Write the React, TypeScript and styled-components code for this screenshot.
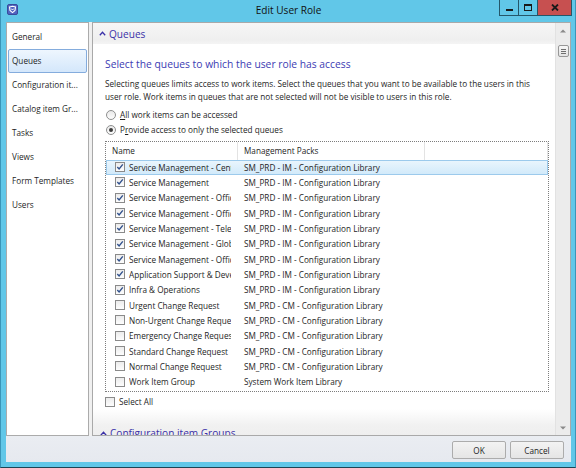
import React from 'react';
import styled, { createGlobalStyle } from 'styled-components';

const FONT = `"Open Sans", "Noto Sans", sans-serif`;

const GlobalStyle = createGlobalStyle`
  html, body {
    margin: 0;
    padding: 0;
    background: #61c7e8;
  }
  body {
    width: 576px;
    height: 468px;
    overflow: hidden;
  }
  * {
    box-sizing: border-box;
  }
`;

// Рамка вікна
const Window = styled.div`
  width: 576px;
  height: 468px;
  display: flex;
  flex-direction: column;
  background: #61c7e8;
  border: 1px solid #3a95b8;
  border-top: none;
  border-bottom-color: #1d4454;
  padding: 0 4px 5px 5px;
  font-family: ${FONT};
  color: #1e1e1e;
`;

const TitleBar = styled.div`
  height: 22px;
  display: grid;
  grid-template-columns: 1fr auto 1fr;
  align-items: start;
`;

const AppIcon = styled.div`
  margin: 4px 0 0 1px;
  width: 11px;
  height: 11px;
  display: flex;
`;

const TitleText = styled.div`
  font-size: 10.1px;
  line-height: 21px;
  color: #111;
`;

const Controls = styled.div`
  justify-self: end;
  display: flex;
  margin-right: -1px;
`;

const CtrlButton = styled.div<{ $w: number; $close?: boolean }>`
  width: ${p => p.$w}px;
  height: 16px;
  margin-left: -1px;
  border: 1px solid #24576a;
  border-top: none;
  background: ${p => (p.$close ? '#c75050' : '#61c7e8')};
  display: flex;
  align-items: center;
  justify-content: center;
`;

const MinGlyph = styled.div`
  width: 7px;
  height: 2px;
  margin-top: 5px;
  background: #1a1a1a;
`;

const MaxGlyph = styled.div`
  width: 8px;
  height: 7px;
  border: 1px solid #1a1a1a;
  border-top-width: 2px;
`;

const Client = styled.div`
  flex: 1;
  display: flex;
  flex-direction: column;
  background: #f0f0f0;
`;

const Main = styled.div`
  height: 414px;
  display: flex;
  gap: 3px;
`;

// Ліва навігація
const Nav = styled.div`
  width: 83px;
  background: #fff;
  border: 1px solid #ababab;
  padding: 2px 1px;
  display: flex;
  flex-direction: column;
`;

const NavItem = styled.div<{ $active?: boolean }>`
  height: 24px;
  line-height: 22px;
  font-size: 8.2px;
  padding-left: 3px;
  border: 1px solid ${p => (p.$active ? '#84acdd' : 'transparent')};
  border-radius: 2px;
  background: ${p => (p.$active ? 'linear-gradient(#eef6fe, #d4e7fb)' : 'transparent')};
  white-space: nowrap;
  overflow: hidden;
`;

const ContentPanel = styled.div`
  flex: 1;
  display: flex;
  background: #fff;
  border: 1px solid #a9a9a9;
`;

const ScrollArea = styled.div`
  flex: 1;
  overflow: hidden;
  display: flex;
  flex-direction: column;
`;

const ExpanderHeader = styled.div<{ $fade?: boolean }>`
  flex-shrink: 0;
  height: ${p => (p.$fade ? '36px' : '21px')};
  padding: ${p => (p.$fade ? '13px 0 0 7px' : '0 0 0 6px')};
  display: flex;
  align-items: center;
  gap: 3px;
  font-size: 10.1px;
  color: #3a30a8;
  background: ${p =>
    p.$fade
      ? 'linear-gradient(#ffffff, #f1f1f1 45%, #ececec)'
      : 'linear-gradient(#f6f6f6, #efefef 80%, #f4f4f4)'};
`;

const Body = styled.div`
  flex-shrink: 0;
  padding: 0 6px 0 12px;
`;

const Heading = styled.h2`
  margin: 11px 0 0;
  font-size: 10.3px;
  line-height: 18px;
  font-weight: 400;
  color: #3b3bb3;
`;

const Desc = styled.p`
  margin: 4px 0 0;
  font-size: 8.2px;
  line-height: 13px;
`;

const RadioGroup = styled.div`
  margin-top: 4px;
  display: flex;
  flex-direction: column;
`;

const RadioRow = styled.div`
  height: 15px;
  display: flex;
  align-items: center;
  gap: 4px;
  font-size: 8.2px;
  padding-left: 1px;
`;

const RadioCircle = styled.div<{ $on?: boolean }>`
  width: 10px;
  height: 10px;
  border-radius: 50%;
  border: 1px solid #8e8f8f;
  background: linear-gradient(#e9e9e9, #fdfdfd);
  display: flex;
  align-items: center;
  justify-content: center;

  &::after {
    content: '';
    width: 4px;
    height: 4px;
    border-radius: 50%;
    background: ${p => (p.$on ? '#3b3b3b' : 'transparent')};
  }
`;

// Таблиця черг
const Grid = styled.div`
  margin-top: 3.5px;
  height: 251px;
  border: 1px dotted #7d7d7d;
  display: flex;
  flex-direction: column;
  overflow: hidden;
`;

const GridHeader = styled.div`
  height: 18px;
  display: flex;
  flex-shrink: 0;
`;

const HeaderCell = styled.div<{ $w?: number }>`
  width: ${p => (p.$w ? `${p.$w}px` : 'auto')};
  flex: ${p => (p.$w ? '0 0 auto' : '1')};
  padding-left: 6px;
  font-size: 8.2px;
  line-height: 18px;
  border-right: 1px solid #e3e3e3;
`;

const Row = styled.div<{ $selected?: boolean }>`
  height: 15.33px;
  flex-shrink: 0;
  display: flex;
  align-items: center;
  font-size: 8.2px;
  border: 1px solid ${p => (p.$selected ? '#9ccaec' : 'transparent')};
  background: ${p => (p.$selected ? 'linear-gradient(#e9f5fd, #d2eafa)' : 'transparent')};
  white-space: nowrap;
`;

const NameCell = styled.div`
  width: 131px;
  flex-shrink: 0;
  display: flex;
  align-items: center;
  gap: 4px;
  padding: 0 7px 0 8px;
`;

const NameText = styled.span`
  flex: 1;
  min-width: 0;
  overflow: hidden;
`;

const PackCell = styled.div`
  width: 187px;
  flex-shrink: 0;
  padding-left: 6px;
  overflow: hidden;
`;

const CheckBox = styled.div`
  width: 10px;
  height: 10px;
  flex-shrink: 0;
  border: 1px solid #8a8a8a;
  background: linear-gradient(#ececec, #fdfdfd);
  display: flex;
  align-items: center;
  justify-content: center;
`;

const SelectAllRow = styled.div`
  margin-top: 3px;
  height: 14px;
  display: flex;
  align-items: center;
  gap: 4px;
  font-size: 8.2px;
`;

// Смуга прокрутки
const ScrollBar = styled.div`
  width: 15px;
  flex-shrink: 0;
  background: #ececec;
  border-left: 1px solid #e2e2e2;
  display: flex;
  flex-direction: column;
  align-items: center;
`;

const ArrowBox = styled.div`
  height: 15px;
  width: 100%;
  display: flex;
  align-items: center;
  justify-content: center;
`;

const Thumb = styled.div`
  margin-top: 7px;
  width: 11px;
  height: 12px;
  border: 1px solid #979797;
  border-radius: 2px;
  background: linear-gradient(#f7f7f7, #e3e3e3);
  display: flex;
  flex-direction: column;
  align-items: center;
  justify-content: center;
  gap: 1px;
`;

const Grip = styled.div`
  width: 5px;
  height: 1px;
  background: #6f6f6f;
`;

const Spacer = styled.div`
  flex: 1;
`;

const Footer = styled.div`
  height: 26px;
  display: flex;
  justify-content: flex-end;
  gap: 4px;
  padding: 5px 7px 0 0;
  background: linear-gradient(#eaedf2, #e6e9ef);
`;

const DialogButton = styled.button`
  width: 54px;
  height: 18px;
  padding: 0;
  font: inherit;
  font-size: 8.2px;
  color: #1e1e1e;
  border: 1px solid #acacac;
  border-radius: 2px;
  background: linear-gradient(#f3f3f3, #e5e5e5);
`;

const Chevron = () => (
  <svg width="7" height="5" viewBox="0 0 7 5">
    <path d="M0.8 4.2 L3.5 1.3 L6.2 4.2" fill="none" stroke="#3a30a8" strokeWidth="1.3" />
  </svg>
);

const Check = () => (
  <svg width="8" height="8" viewBox="0 0 8 8">
    <path d="M1.3 4.1 L3.1 6 L6.8 1.4" fill="none" stroke="#30508c" strokeWidth="1.4" />
  </svg>
);

const Arrow = ({ down }: { down?: boolean }) => (
  <svg width="6" height="4" viewBox="0 0 6 4">
    <path d={down ? 'M0 0.5 L6 0.5 L3 3.5 Z' : 'M0 3.5 L6 3.5 L3 0.5 Z'} fill="#8a8a8a" />
  </svg>
);

const navItems = [
  'General',
  'Queues',
  'Configuration it...',
  'Catalog item Gr...',
  'Tasks',
  'Views',
  'Form Templates',
  'Users',
];

const IM = 'SM_PRD - IM - Configuration Library';
const CM = 'SM_PRD - CM - Configuration Library';

const queues: { name: string; pack: string; checked: boolean }[] = [
  { name: 'Service Management - Central', pack: IM, checked: true },
  { name: 'Service Management', pack: IM, checked: true },
  { name: 'Service Management - Office 365', pack: IM, checked: true },
  { name: 'Service Management - Office Apps', pack: IM, checked: true },
  { name: 'Service Management - Telephony', pack: IM, checked: true },
  { name: 'Service Management - Global', pack: IM, checked: true },
  { name: 'Service Management - Office Support', pack: IM, checked: true },
  { name: 'Application Support & Development', pack: IM, checked: true },
  { name: 'Infra & Operations', pack: IM, checked: true },
  { name: 'Urgent Change Request', pack: CM, checked: false },
  { name: 'Non-Urgent Change Request', pack: CM, checked: false },
  { name: 'Emergency Change Request', pack: CM, checked: false },
  { name: 'Standard Change Request', pack: CM, checked: false },
  { name: 'Normal Change Request', pack: CM, checked: false },
  { name: 'Work Item Group', pack: 'System Work Item Library', checked: false },
];

const App: React.FC = () => {
  return (
    <>
      <GlobalStyle />
      <Window>
        <TitleBar>
          <AppIcon>
            <svg width="11" height="11" viewBox="0 0 11 11">
              <rect x="0.5" y="0.5" width="10" height="10" rx="1.5" fill="#5164c0" stroke="#3a4a9a" />
              <path d="M2.5 3 L5.5 2.2 L8.5 3 L8 6.5 L5.5 8.6 L3 6.5 Z" fill="none" stroke="#fff" strokeWidth="1.1" />
              <path d="M4.2 4.6 L5.5 6 L6.8 4.6" fill="none" stroke="#fff" strokeWidth="1" />
            </svg>
          </AppIcon>
          <TitleText>Edit User Role</TitleText>
          <Controls>
            <CtrlButton $w={20}>
              <MinGlyph />
            </CtrlButton>
            <CtrlButton $w={20}>
              <MaxGlyph />
            </CtrlButton>
            <CtrlButton $w={35} $close>
              <svg width="8" height="7" viewBox="0 0 8 7">
                <path d="M1 0.5 L7 6.5 M7 0.5 L1 6.5" stroke="#1a1a1a" strokeWidth="1.8" />
              </svg>
            </CtrlButton>
          </Controls>
        </TitleBar>

        <Client>
          <Main>
            <Nav>
              {navItems.map(item => (
                <NavItem key={item} $active={item === 'Queues'}>
                  {item}
                </NavItem>
              ))}
            </Nav>

            <ContentPanel>
              <ScrollArea>
                <ExpanderHeader>
                  <Chevron />
                  Queues
                </ExpanderHeader>
                <Body>
                  <Heading>Select the queues to which the user role has access</Heading>
                  <Desc>
                    Selecting queues limits access to work items. Select the queues that you want to be available to the users in this
                    <br />
                    user role. Work items in queues that are not selected will not be visible to users in this role.
                  </Desc>
                  <RadioGroup>
                    <RadioRow>
                      <RadioCircle />
                      <span>
                        <u>A</u>ll work items can be accessed
                      </span>
                    </RadioRow>
                    <RadioRow>
                      <RadioCircle $on />
                      <span>
                        P<u>r</u>ovide access to only the selected queues
                      </span>
                    </RadioRow>
                  </RadioGroup>

                  <Grid>
                    <GridHeader>
                      <HeaderCell $w={132}>Name</HeaderCell>
                      <HeaderCell $w={187}>Management Packs</HeaderCell>
                      <HeaderCell />
                    </GridHeader>
                    {queues.map((q, i) => (
                      <Row key={i} $selected={i === 0}>
                        <NameCell>
                          <CheckBox>{q.checked && <Check />}</CheckBox>
                          <NameText>{q.name}</NameText>
                        </NameCell>
                        <PackCell>{q.pack}</PackCell>
                      </Row>
                    ))}
                  </Grid>

                  <SelectAllRow>
                    <CheckBox />
                    <span>Select All</span>
                  </SelectAllRow>
                </Body>
                <ExpanderHeader $fade>
                  <Chevron />
                  Configuration item Groups
                </ExpanderHeader>
              </ScrollArea>

              <ScrollBar>
                <ArrowBox>
                  <Arrow />
                </ArrowBox>
                <Thumb>
                  <Grip />
                  <Grip />
                  <Grip />
                </Thumb>
                <Spacer />
                <ArrowBox>
                  <Arrow down />
                </ArrowBox>
              </ScrollBar>
            </ContentPanel>
          </Main>

          <Footer>
            <DialogButton>OK</DialogButton>
            <DialogButton>Cancel</DialogButton>
          </Footer>
        </Client>
      </Window>
    </>
  );
};

export default App;
